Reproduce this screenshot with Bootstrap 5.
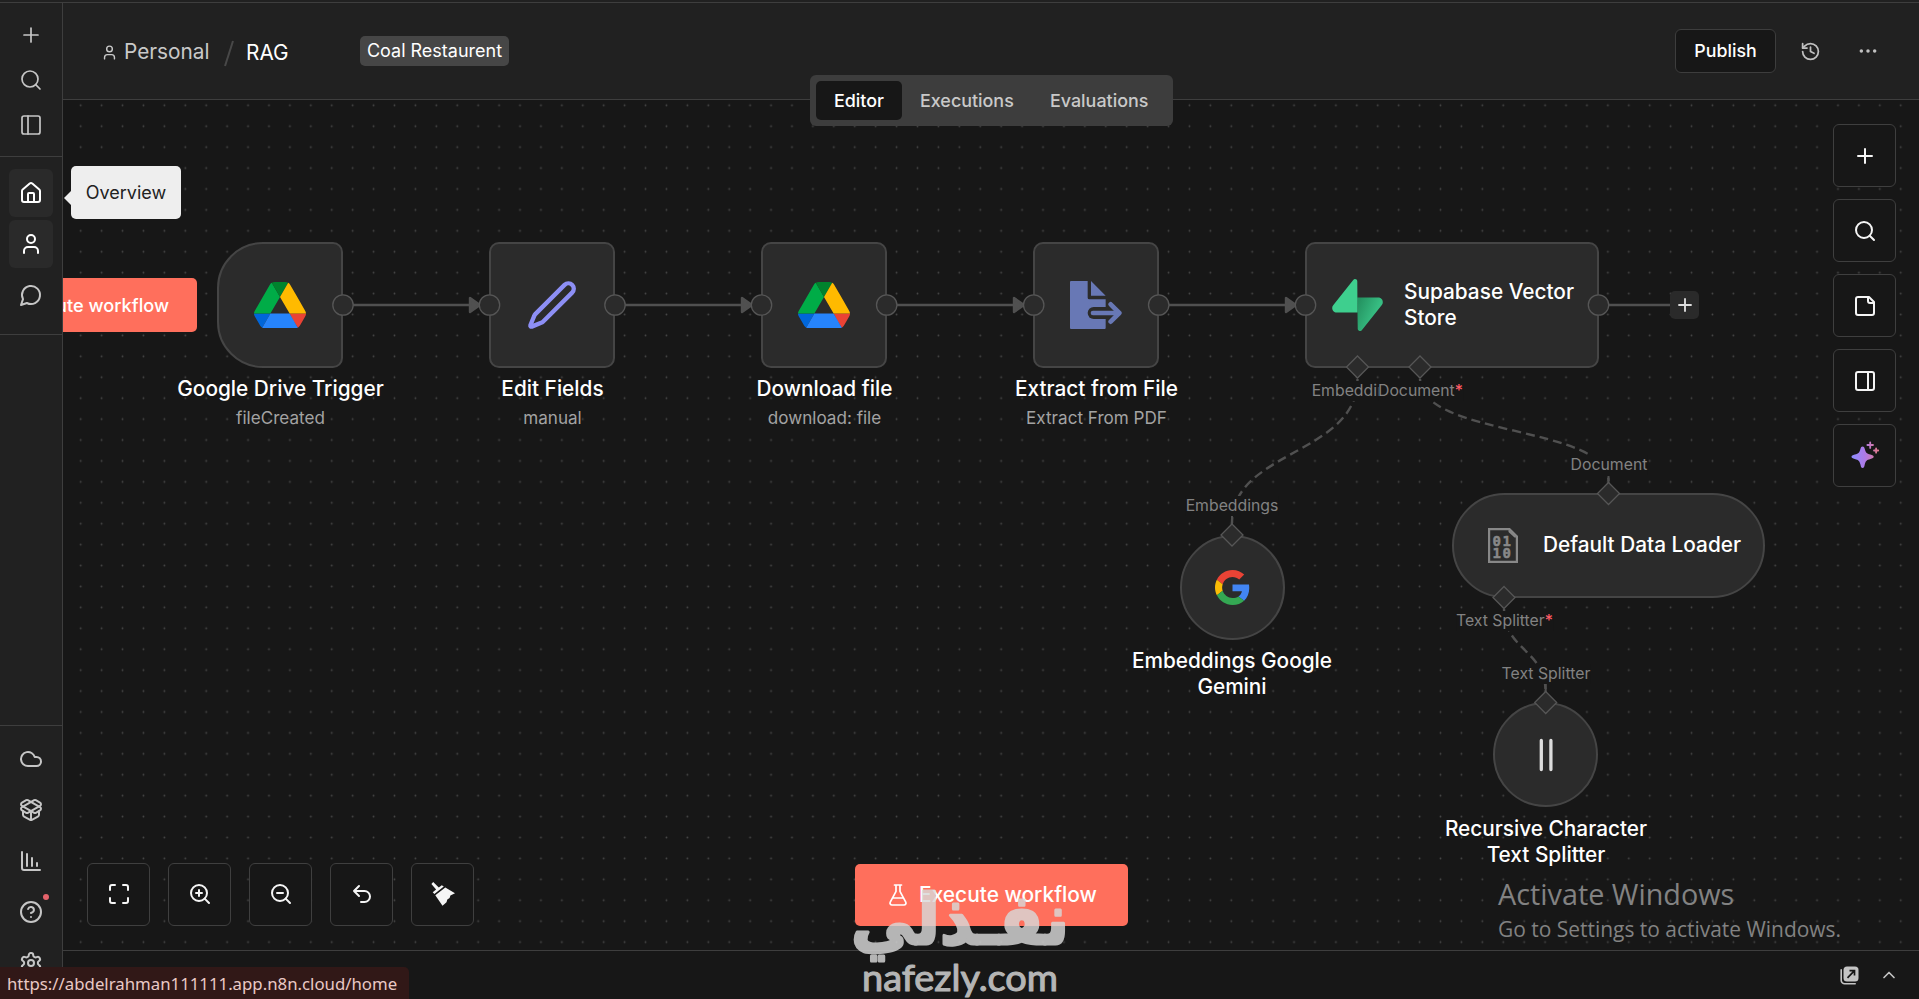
<!DOCTYPE html>
<html lang="en">
<head>
<meta charset="utf-8">
<title>RAG - n8n</title>
<meta name="viewport" content="width=device-width, initial-scale=1">
<link href="https://cdn.jsdelivr.net/npm/bootstrap@5.3.0/dist/css/bootstrap.min.css" rel="stylesheet">
<style>
  :root { --panel:#212121; --canvas:#171717; --line:#3e3e3e; --node:#2b2b2b; --accent:#ff6f5c; }
  body { background:var(--canvas); color:#fff; font-family:Inter,"Liberation Sans",sans-serif; font-size:18px; line-height:1.2; }
  .shell { width:1919px; height:999px; }
  .top-strip { height:3px; background:var(--panel); border-bottom:1px solid var(--line); }
  .ico { width:24px; height:24px; fill:none; stroke:currentColor; stroke-width:2; stroke-linecap:round; stroke-linejoin:round; display:block; flex:none; }
  .thin { stroke-width:1.7; }
  .ico-16 { width:17px; height:17px; }
  .ico-18 { width:18px; height:18px; }
  .ico-20 { width:20px; height:20px; }
  .ico-21 { width:21px; height:21px; }

  .side { width:63px; background:var(--panel); border-right:1px solid var(--line); color:#c6c6c6; }
  .side-group { border-bottom:1px solid var(--line); }
  .side-btn { width:44px; height:48px; border-radius:6px; position:relative; }
  .side-btn.on { background:#2a2a2a; color:#fff; }
  .side-top .side-btn { height:45px; }
  .g1 { height:154px; padding-top:9px; }
  .g2 { height:178px; padding-top:12px; }
  .g2 .side-btn { margin-bottom:3px; }
  .g3 { border-top:1px solid var(--line); padding-top:7px; height:274px; }
  .g3 .side-btn { height:51px; }
  .alert-dot { position:absolute; left:34px; top:8px; width:6px; height:6px; border-radius:50%; background:#e5636b; }

  .topbar { height:97px; background:var(--panel); border-bottom:1px solid var(--line); padding:0 36px 0 38px; }
  .crumbs { height:97px; padding-top:3px; width:187px; }
  .crumb-home { color:#c9c9c9; }
  .crumb-text { width:86px; margin-left:6px; font-size:20.8px; white-space:nowrap; }
  .crumb-now { font-size:20.8px; padding-top:1px; white-space:nowrap; }
  .chip { background:#464646; border-radius:5px; height:30px; width:149px; font-size:18px; margin-left:72px; margin-bottom:1px; }
  .btn-publish { width:101px; height:44px; background:var(--canvas); border:1px solid #3d3d3d; border-radius:6px; color:#fff; font-weight:500; font-size:17.8px; }
  .tail { color:#c0c0c0; padding-right:5px; }
  .hist { margin-left:24px; }
  .dots { margin-left:37px; }

  .tabs-pill { left:747px; top:-25px; width:363px; height:51px; background:#3d3d3d; border-radius:6px; padding:6px; font-weight:500; font-size:17.9px; color:#c9c9c9; z-index:5; }
  .tabs-pill span { height:39px; border-radius:5px; }
  .tabs-pill .sel { background:var(--canvas); color:#fff; width:86px; }
  .tab2 { padding-left:18px; width:130px; }
  .tab3 { padding-left:18px; }

  .board { background:var(--canvas); }
  .world { left:-63px; top:-100px; width:1919px; height:999px; }
  .world > * { position:absolute; }
  .wires { left:0; top:0; width:1919px; height:999px; }
  .nd { background:var(--node); border:2px solid #454545; width:126px; height:126px; top:242px; border-radius:10px; display:flex; align-items:center; justify-content:center; }
  .n1 { left:217px; border-radius:46px 10px 10px 46px; }
  .n2 { left:489px; } .n3 { left:761px; } .n4 { left:1033px; }
  .n5 { left:1305px; width:294px; justify-content:flex-start; padding-left:25px; gap:21px; }
  .n6 { left:1180px; top:535px; width:105px; height:105px; border-radius:50%; }
  .n7 { left:1452px; top:493px; width:313px; height:105px; border-radius:53px; justify-content:flex-start; padding-left:34px; gap:25px; }
  .n7 .ttl { margin-top:-2px; }
  .n8 { left:1493px; top:702px; width:105px; height:105px; border-radius:50%; }
  .ttl { font-weight:500; font-size:20.8px; line-height:26px; color:#fff; text-align:center; white-space:nowrap; }
  .cap { width:280px; text-align:center; top:376px; }
  .cap small { display:block; font-size:17.1px; font-weight:400; color:#a3a3a3; line-height:22px; margin-top:5px; }
  .c1 { left:140.5px; } .c2 { left:412.5px; } .c3 { left:684.5px; } .c4 { left:956.5px; }
  .c6 { left:1092px; top:648px; } .c8 { left:1406px; top:816px; }
  .edit-ico { width:52px; height:52px; color:#8d8ff5; }
  .port { background:var(--canvas); color:#828282; font-size:15.8px; line-height:20px; transform:translateX(-50%); white-space:nowrap; }
  .port b { color:#ff5b66; font-weight:500; }
  .pa { left:1358px; top:381px; } .pb { left:1420.5px; top:381px; } .pc { left:1232px; top:496px; }
  .pd { left:1609px; top:455px; } .pe { left:1504.5px; top:611px; } .pf { left:1546px; top:664px; }
  .add-node { left:1670px; top:291px; width:29px; height:28px; background:#2a2a2a; border-radius:5px; color:#ddd; display:flex; align-items:center; justify-content:center; }

  .run-left { left:40px; top:278px; width:157px; height:54px; background:var(--accent); border-radius:5px; font-weight:500; font-size:18.2px; padding:2px 28px 0 0; }
  .run-main { left:855px; top:864px; width:273px; height:62px; background:var(--accent); border-radius:5px; font-weight:500; font-size:20.9px; gap:9px; }
  .sq { width:63px; height:63px; border:1px solid #3f3f3f; border-radius:6px; background:var(--canvas); color:#f5f5f5; display:flex; align-items:center; justify-content:center; }
  .tools-b { left:87px; top:863px; gap:18px; }
  .tools-b .sq { padding-bottom:1px; }
  .tools-r { left:1833px; top:124px; gap:12px; }

  .activate { left:1498px; top:873px; color:#828282; font-family:"Open Sans","Noto Sans",sans-serif; white-space:nowrap; }
  .activate .a1 { font-size:28.8px; line-height:41px; }
  .activate .a2 { font-size:20.95px; line-height:30px; }

  .logbar { height:49px; border-top:1px solid var(--line); padding-right:20px; color:#c4c4c4; gap:20px; }
  .tip { left:71px; top:166px; width:110px; height:53px; background:#eee; color:#222; border-radius:5px; z-index:9; font-size:18px; }
  .tip::before { content:""; position:absolute; left:-7px; top:24px; border:8px solid transparent; border-right:8px solid #eee; border-left:0; }
  .url { left:0; bottom:0; width:409px; height:32px; background:#311817; color:#e9c9c5; border-top-right-radius:5px; font-family:"Noto Sans","Open Sans",sans-serif; font-size:16.8px; padding:2px 0 0 7px; z-index:9; white-space:nowrap; }
  .wmark { left:850px; top:880px; width:220px; height:119px; z-index:10; opacity:.82; fill:#d8d8d8; stroke:#d8d8d8; }
</style>
</head>
<body class="overflow-hidden">
<div class="shell d-flex flex-column position-relative overflow-hidden">
  <div class="top-strip flex-shrink-0"></div>
  <div class="d-flex flex-grow-1">

    <nav class="side d-flex flex-column flex-shrink-0">
      <div class="side-group side-top g1 d-flex flex-column align-items-center">
        <div class="side-btn d-flex align-items-center justify-content-center"><svg class="ico thin" viewBox="0 0 24 24"><path d="M5 12h14M12 5v14"/></svg></div>
        <div class="side-btn d-flex align-items-center justify-content-center"><svg class="ico thin" viewBox="0 0 24 24"><circle cx="11" cy="11" r="8"/><path d="m21 21-4.3-4.3"/></svg></div>
        <div class="side-btn d-flex align-items-center justify-content-center"><svg class="ico thin" viewBox="0 0 24 24"><rect x="3" y="3" width="18" height="18" rx="2"/><path d="M9 3v18"/></svg></div>
      </div>
      <div class="side-group g2 d-flex flex-column align-items-center">
        <div class="side-btn on d-flex align-items-center justify-content-center"><svg class="ico" viewBox="0 0 24 24"><path d="M15 21v-8a1 1 0 0 0-1-1h-4a1 1 0 0 0-1 1v8"/><path d="M3 10a2 2 0 0 1 .709-1.528l7-5.999a2 2 0 0 1 2.582 0l7 5.999A2 2 0 0 1 21 10v9a2 2 0 0 1-2 2H5a2 2 0 0 1-2-2z"/></svg></div>
        <div class="side-btn on d-flex align-items-center justify-content-center"><svg class="ico" viewBox="0 0 24 24"><path d="M19 21v-2a4 4 0 0 0-4-4H9a4 4 0 0 0-4 4v2"/><circle cx="12" cy="7" r="4"/></svg></div>
        <div class="side-btn d-flex align-items-center justify-content-center"><svg class="ico" viewBox="0 0 24 24"><path d="M7.9 20A9 9 0 1 0 4 16.1L2 22Z"/></svg></div>
      </div>
      <div class="g3 mt-auto d-flex flex-column align-items-center">
        <div class="side-btn d-flex align-items-center justify-content-center"><svg class="ico" viewBox="0 0 24 24"><path d="M17.5 19H9a7 7 0 1 1 6.71-9h1.79a4.5 4.5 0 1 1 0 9Z"/></svg></div>
        <div class="side-btn d-flex align-items-center justify-content-center"><svg class="ico" viewBox="0 0 24 24"><path d="M12 22v-9"/><path d="M15.17 2.21a1.67 1.67 0 0 1 1.63 0L21 4.57a1.93 1.93 0 0 1 0 3.36L8.82 14.79a1.655 1.655 0 0 1-1.64 0L3 12.43a1.93 1.93 0 0 1 0-3.36z"/><path d="M20 13v3.87a2.06 2.06 0 0 1-1.11 1.83l-6 3.08a1.93 1.93 0 0 1-1.78 0l-6-3.08A2.06 2.06 0 0 1 4 16.87V13"/><path d="M21 12.43a1.93 1.93 0 0 0 0-3.36L8.83 2.2a1.64 1.64 0 0 0-1.63 0L3 4.57a1.93 1.93 0 0 0 0 3.36l12.18 6.86a1.636 1.636 0 0 0 1.63 0z"/></svg></div>
        <div class="side-btn d-flex align-items-center justify-content-center"><svg class="ico" viewBox="0 0 24 24"><path d="M13 17V9M18 17v-3M3 3v16a2 2 0 0 0 2 2h16M8 17V5"/></svg></div>
        <div class="side-btn d-flex align-items-center justify-content-center"><svg class="ico" viewBox="0 0 24 24"><circle cx="12" cy="12" r="10"/><path d="M9.09 9a3 3 0 0 1 5.83 1c0 2-3 3-3 3M12 17h.01"/></svg><i class="alert-dot"></i></div>
        <div class="side-btn d-flex align-items-center justify-content-center"><svg class="ico" viewBox="0 0 24 24"><path d="M12.22 2h-.44a2 2 0 0 0-2 2v.18a2 2 0 0 1-1 1.73l-.43.25a2 2 0 0 1-2 0l-.15-.08a2 2 0 0 0-2.73.73l-.22.38a2 2 0 0 0 .73 2.73l.15.1a2 2 0 0 1 1 1.72v.51a2 2 0 0 1-1 1.74l-.15.09a2 2 0 0 0-.73 2.73l.22.38a2 2 0 0 0 2.73.73l.15-.08a2 2 0 0 1 2 0l.43.25a2 2 0 0 1 1 1.73V20a2 2 0 0 0 2 2h.44a2 2 0 0 0 2-2v-.18a2 2 0 0 1 1-1.73l.43-.25a2 2 0 0 1 2 0l.15.08a2 2 0 0 0 2.73-.73l.22-.39a2 2 0 0 0-.73-2.73l-.15-.08a2 2 0 0 1-1-1.74v-.5a2 2 0 0 1 1-1.74l.15-.09a2 2 0 0 0 .73-2.73l-.22-.38a2 2 0 0 0-2.73-.73l-.15.08a2 2 0 0 1-2 0l-.43-.25a2 2 0 0 1-1-1.73V4a2 2 0 0 0-2-2z"/><circle cx="12" cy="12" r="3"/></svg></div>
      </div>
    </nav>

    <main class="d-flex flex-column flex-grow-1">
      <header class="topbar d-flex align-items-center flex-shrink-0">
        <div class="crumbs d-flex align-items-center">
          <svg class="ico ico-16 crumb-home flex-shrink-0" viewBox="0 0 24 24"><path d="M19 21v-2a4 4 0 0 0-4-4H9a4 4 0 0 0-4 4v2"/><circle cx="12" cy="7" r="4"/></svg>
          <span class="crumb-home crumb-text flex-shrink-0">Personal</span>
          <svg class="flex-shrink-0" width="36" height="28" viewBox="0 0 36 28" fill="none" stroke="#484848" stroke-width="2"><path d="M15 27 23 2"/></svg>
          <span class="crumb-now">RAG</span>
        </div>
        <div class="chip d-flex align-items-center justify-content-center">Coal Restaurent</div>
        <div class="ms-auto d-flex align-items-center tail">
          <button class="btn btn-publish p-0">Publish</button>
          <svg class="ico ico-21 hist" viewBox="0 0 24 24"><path d="M3 12a9 9 0 1 0 9-9 9.75 9.75 0 0 0-6.74 2.74L3 8"/><path d="M3 3v5h5M12 7v5l4 2"/></svg>
          <svg class="ico ico-20 dots" viewBox="0 0 24 24"><circle cx="4" cy="12" r="1.1"/><circle cx="12" cy="12" r="1.1"/><circle cx="20" cy="12" r="1.1"/></svg>
        </div>
      </header>

      <section class="board position-relative flex-grow-1">
        <div class="tabs-pill position-absolute d-flex">
          <span class="sel d-flex align-items-center justify-content-center">Editor</span>
          <span class="d-flex align-items-center tab2">Executions</span>
          <span class="d-flex align-items-center tab3">Evaluations</span>
        </div>
        <div class="position-absolute top-0 start-0 w-100 h-100 overflow-hidden">
        <div class="world position-absolute">
          <svg class="wires" viewBox="0 0 1919 999" fill="none">
            <defs>
              <pattern id="grid" x="70.24" y="94.84" width="20.92" height="20.92" patternUnits="userSpaceOnUse"><circle cx="10.46" cy="10.46" r=".9" fill="#474747"/></pattern>
            </defs>
            <rect x="63" y="100" width="1856" height="850" fill="url(#grid)"/>
            <g stroke="#505050" stroke-width="2.4">
              <path d="M353 305H471M625 305H743M897 305H1015M1169 305H1287M1609 305H1670"/>
              <g fill="#505050" stroke-linejoin="round"><path d="M470 298v14l10-7zM742 298v14l10-7zM1014 298v14l10-7zM1286 298v14l10-7z"/></g>
              <g stroke-dasharray="9 5">
                <path d="M1357.500 379C1357.500 455 1232 450 1232 523"/>
                <path d="M1420 379C1420 437 1608.500 425 1608.500 481"/>
                <path d="M1504 609C1504 650 1545.500 650 1545.500 691"/>
              </g>
              <path stroke-width="2" d="M1232 516v9M1608.500 476v8M1545.700 684v8"/>
            </g>
          </svg>

          <div class="nd n1"><svg width="52" height="46.500" viewBox="0 0 87.300 78"><path fill="#0066da" d="m6.600 66.850 3.850 6.650c.8 1.400 1.950 2.500 3.300 3.300l13.750-23.800h-27.500c0 1.550.4 3.100 1.200 4.500z"/><path fill="#00ac47" d="m43.650 25-13.750-23.800c-1.350.8-2.500 1.900-3.300 3.300l-25.400 44a9.060 9.060 0 0 0-1.200 4.500h27.500z"/><path fill="#ea4335" d="m73.550 76.800c1.350-.8 2.500-1.900 3.300-3.300l1.600-2.750 7.650-13.250c.8-1.400 1.200-2.950 1.200-4.500h-27.502l5.852 11.500z"/><path fill="#00832d" d="m43.650 25 13.750-23.800c-1.350-.8-2.900-1.200-4.500-1.200h-18.500c-1.600 0-3.150.45-4.500 1.200z"/><path fill="#2684fc" d="m59.800 53h-32.300l-13.750 23.800c1.350.8 2.900 1.200 4.500 1.200h50.800c1.600 0 3.150-.45 4.500-1.200z"/><path fill="#ffba00" d="m73.400 26.500-12.700-22c-.8-1.400-1.950-2.500-3.300-3.300l-13.750 23.800 16.150 28h27.450c0-1.550-.4-3.100-1.200-4.500z"/></svg></div>
          <div class="cap c1"><div class="ttl">Google Drive Trigger</div><small>fileCreated</small></div>

          <div class="nd n2"><svg class="ico edit-ico" viewBox="0 0 24 24"><path d="M21.300 6.300a2.300 2.300 0 0 0-3.500-3.600L4.300 16.200a2 2 0 0 0-.5.830L2.021 21.356a.5.5 0 0 0 .623.622L7 20.200a2 2 0 0 0 .83-.497z"/></svg></div>
          <div class="cap c2"><div class="ttl">Edit Fields</div><small>manual</small></div>

          <div class="nd n3"><svg width="52" height="46.500" viewBox="0 0 87.300 78"><path fill="#0066da" d="m6.600 66.850 3.850 6.650c.8 1.400 1.950 2.500 3.300 3.300l13.750-23.800h-27.500c0 1.550.4 3.100 1.200 4.500z"/><path fill="#00ac47" d="m43.650 25-13.750-23.800c-1.350.8-2.500 1.900-3.300 3.300l-25.400 44a9.060 9.060 0 0 0-1.200 4.500h27.500z"/><path fill="#ea4335" d="m73.550 76.800c1.350-.8 2.500-1.900 3.300-3.300l1.600-2.750 7.650-13.250c.8-1.400 1.200-2.950 1.200-4.500h-27.502l5.852 11.500z"/><path fill="#00832d" d="m43.650 25 13.750-23.800c-1.350-.8-2.900-1.200-4.500-1.200h-18.500c-1.600 0-3.150.45-4.500 1.200z"/><path fill="#2684fc" d="m59.800 53h-32.300l-13.750 23.800c1.350.8 2.900 1.200 4.500 1.200h50.800c1.600 0 3.150-.45 4.500-1.200z"/><path fill="#ffba00" d="m73.400 26.500-12.700-22c-.8-1.400-1.950-2.500-3.300-3.300l-13.750 23.800 16.150 28h27.450c0-1.550-.4-3.100-1.200-4.500z"/></svg></div>
          <div class="cap c3"><div class="ttl">Download file</div><small>download: file</small></div>

          <div class="nd n4"><svg width="52" height="48" viewBox="0 0 156 144" fill="none" stroke-linecap="round" stroke-linejoin="round"><path fill="#6878b5" d="M3 0H53V50a5 5 0 0 0 5 5h49v86a3 3 0 0 1-3 3H3a3 3 0 0 1-3-3V3a3 3 0 0 1 3-3zM63 0l44 44H63z"/><path stroke="#2b2b2b" stroke-width="36" d="M71 96h50"/><path stroke="#6878b5" stroke-width="14" d="M69 96h70"/><path stroke="#6878b5" stroke-width="14" d="M122 70l26 26-26 26"/></svg></div>
          <div class="cap c4"><div class="ttl">Extract from File</div><small>Extract From PDF</small></div>

          <div class="nd n5"><svg width="51" height="52.500" viewBox="0 0 109 113"><defs><linearGradient id="sb" x1="54" y1="55" x2="94" y2="72" gradientUnits="userSpaceOnUse"><stop stop-color="#249361"/><stop offset="1" stop-color="#37bd82"/></linearGradient></defs><path fill="url(#sb)" d="M63.708 110.284C60.848 113.885 55.050 111.912 54.981 107.314L53.974 40.063H99.194C107.384 40.063 111.952 49.523 106.859 55.937Z"/><path fill="#3ecf8e" d="M45.317 2.071C48.177-1.530 53.975.443 54.043 5.041L54.485 72.292H9.831C1.640 72.292-2.928 62.832 2.166 56.418Z"/></svg><div class="ttl text-start">Supabase Vector<br>Store</div></div>
          <div class="add-node"><svg class="ico ico-18" viewBox="0 0 24 24"><path d="M4 12h16M12 4v16" stroke-width="2.500"/></svg></div>

          <div class="nd n6"><svg width="35" height="35" viewBox="0 0 48 48"><path fill="#EA4335" d="M24 9.500c3.540 0 6.710 1.220 9.210 3.600l6.850-6.850C35.900 2.380 30.470 0 24 0 14.620 0 6.510 5.380 2.560 13.220l7.980 6.190C12.430 13.720 17.740 9.500 24 9.500z"/><path fill="#4285F4" d="M46.980 24.550c0-1.570-.15-3.090-.38-4.550H24v9.020h12.940c-.58 2.960-2.260 5.480-4.780 7.180l7.730 6c4.510-4.180 7.090-10.360 7.090-17.650z"/><path fill="#FBBC05" d="M10.530 28.590c-.48-1.450-.76-2.990-.76-4.590s.27-3.140.76-4.590l-7.980-6.190C.92 16.460 0 20.120 0 24c0 3.880.92 7.540 2.560 10.780l7.970-6.190z"/><path fill="#34A853" d="M24 48c6.480 0 11.930-2.130 15.890-5.810l-7.730-6c-2.150 1.450-4.920 2.300-8.160 2.300-6.260 0-11.570-4.220-13.470-9.910l-7.980 6.190C6.510 42.620 14.620 48 24 48z"/></svg></div>
          <div class="cap c6 ttl">Embeddings Google<br>Gemini</div>

          <div class="nd n7"><svg width="30" height="35" viewBox="0 0 30 35"><path fill="none" stroke="#888" stroke-width="2.200" d="M1.100 1.100H21.500L28.900 8.500V33.900H1.100z"/><path fill="#888" d="M20.500 1l8.500 8.500h-2.500L20.500 4z"/><g fill="#888" stroke="#888" stroke-width=".5" font-family="DejaVu Sans Mono" font-weight="700" font-size="14"><text x="4.500" y="17.500" textLength="18.500">01</text><text x="4.500" y="30" textLength="18.500">10</text></g></svg><div class="ttl">Default Data Loader</div></div>

          <div class="nd n8"><svg width="16" height="34" viewBox="0 0 16 34" stroke="#ddd" stroke-width="3.300" stroke-linecap="round"><path d="M3.300 2.500v29M12.900 2.500v29"/></svg></div>
          <div class="cap c8 ttl">Recursive Character<br>Text Splitter</div>

          <div class="port pa">Embeddings</div>
          <div class="port pb">Document<b>*</b></div>
          <div class="port pc">Embeddings</div>
          <div class="port pd">Document</div>
          <div class="port pe">Text Splitter<b>*</b></div>
          <div class="port pf">Text Splitter</div>

          <svg class="wires" viewBox="0 0 1919 999" fill="#2b2b2b" stroke="#565656" stroke-width="1.300">
            <circle cx="343" cy="305" r="10.200"/><circle cx="489.500" cy="305" r="10.200"/><circle cx="615" cy="305" r="10.200"/><circle cx="761.500" cy="305" r="10.200"/><circle cx="886.700" cy="305" r="10.200"/><circle cx="1033.700" cy="305" r="10.200"/><circle cx="1158.700" cy="305" r="10.200"/><circle cx="1305.500" cy="305" r="10.200"/><circle cx="1598.500" cy="305" r="10.200"/>
            <path d="M1357.500 356l11 11-11 11-11-11zM1420 356l11 11-11 11-11-11zM1232 524l11 11-11 11-11-11zM1608.500 482.500l11 11-11 11-11-11zM1504 586.500l11 11-11 11-11-11zM1545.700 691.500l11 11-11 11-11-11z"/>
          </svg>

          <div class="run-left d-flex align-items-center justify-content-end text-nowrap">ute workflow</div>

          <div class="tools-b d-flex">
            <div class="sq"><svg class="ico" viewBox="0 0 24 24"><path d="M8 3H5a2 2 0 0 0-2 2v3M21 8V5a2 2 0 0 0-2-2h-3M3 16v3a2 2 0 0 0 2 2h3M16 21h3a2 2 0 0 0 2-2v-3"/></svg></div>
            <div class="sq"><svg class="ico" viewBox="0 0 24 24"><circle cx="11" cy="11" r="8"/><path d="m21 21-4.350-4.350M11 8v6M8 11h6"/></svg></div>
            <div class="sq"><svg class="ico" viewBox="0 0 24 24"><circle cx="11" cy="11" r="8"/><path d="m21 21-4.350-4.350M8 11h6"/></svg></div>
            <div class="sq"><svg class="ico" viewBox="0 0 24 24"><path d="M9 14 4 9l5-5M4 9h10.500a5.500 5.500 0 0 1 0 11H11"/></svg></div>
            <div class="sq"><svg width="24" height="24" viewBox="0 0 24 24" fill="#f5f5f5"><path d="M.4 1.900 2.200.1l5.600 5.400 3-2.300 2 1.300L3.400 12 1.700 10.200l3.400-2.600z"/><path d="M4.300 13.200 14.300 5.400 24 11.300l-4.600 2.200-.8 2.600-2.300 1.300-.8 2.900-4 3.400z"/></svg></div>
          </div>

          <button class="run-main btn text-white p-0 d-flex align-items-center justify-content-center text-nowrap"><svg class="ico thin" viewBox="0 0 24 24"><path d="M14 2v6a2 2 0 0 0 .245.960l5.510 10.080A2 2 0 0 1 18 22H6a2 2 0 0 1-1.755-2.960l5.510-10.080A2 2 0 0 0 10 8V2M6.453 15h11.094M8.500 2h7"/></svg><span>Execute workflow</span></button>

          <div class="tools-r d-flex flex-column">
            <div class="sq"><svg class="ico" viewBox="0 0 24 24"><path d="M5 12h14M12 5v14"/></svg></div>
            <div class="sq"><svg class="ico" viewBox="0 0 24 24"><circle cx="11" cy="11" r="8"/><path d="m21 21-4.300-4.300"/></svg></div>
            <div class="sq"><svg class="ico" viewBox="0 0 24 24"><path d="M16 3H5a2 2 0 0 0-2 2v14a2 2 0 0 0 2 2h14a2 2 0 0 0 2-2V8Z"/><path d="M15 3v4a2 2 0 0 0 2 2h4"/></svg></div>
            <div class="sq"><svg class="ico" viewBox="0 0 24 24"><rect x="3" y="3" width="18" height="18" rx="2"/><path d="M15 3v18"/></svg></div>
            <div class="sq"><svg width="30" height="30" viewBox="0 0 30 30"><defs><linearGradient id="sp" x1="2" y1="16" x2="28" y2="16" gradientUnits="userSpaceOnUse"><stop stop-color="#8e8cff"/><stop offset=".5" stop-color="#ae7ae6"/><stop offset="1" stop-color="#e2798d"/></linearGradient></defs><path fill="url(#sp)" d="M12.600 5.500c1.200 0 1.700.8 2.100 2.300 1 3.800 1.700 4.700 5.700 5.800 2.200.6 3.300 1.100 3.300 2.200s-1.100 1.600-3.300 2.200c-4 1.100-4.700 2-5.700 5.800-.4 2.200-.9 3.300-2.100 3.300s-1.700-1.100-2.100-3.300c-1-3.800-1.700-4.700-5.700-5.800-2.200-.6-3.300-1.100-3.300-2.200s1.100-1.600 3.300-2.200c4-1.100 4.700-2 5.700-5.800.4-1.500.9-2.300 2.100-2.300z"/><path stroke="url(#sp)" stroke-width="1.800" stroke-linecap="round" d="M20.200 1.300v5.600M17.400 4h5.600M26.100 7.500v4.200M24 9.500h4.200"/></svg></div>
          </div>

          <div class="activate"><div class="a1">Activate Windows</div><div class="a2">Go to Settings to activate Windows.</div></div>
        </div>
        </div>
      </section>

      <footer class="logbar d-flex align-items-center justify-content-end flex-shrink-0">
        <svg width="19" height="19" viewBox="0 0 19 19"><rect x="3.500" y=".5" width="15" height="15" rx="3.500" fill="#c4c4c4"/><path d="M1.200 3.800v10.500a3.500 3.500 0 0 0 3.500 3.500h10.500" fill="none" stroke="#c4c4c4" stroke-width="1.600" stroke-linecap="round"/><path d="M7.500 11.800 14 5.200M9.500 4.600h5v5" fill="none" stroke="#171717" stroke-width="1.700"/></svg>
        <svg class="ico ico-20" viewBox="0 0 24 24"><path d="m18 15-6-6-6 6"/></svg>
      </footer>
    </main>
  </div>

  <div class="tip position-absolute d-flex align-items-center justify-content-center">Overview</div>
  <div class="url position-absolute d-flex align-items-center">https://abdelrahman111111.app.n8n.cloud/home</div>
  <svg class="wmark position-absolute" viewBox="0 0 220 119" stroke-linejoin="round">
    <text x="110" y="64" direction="rtl" text-anchor="middle" font-family="DejaVu Sans" font-weight="700" font-size="70" stroke-width="3" textLength="218" lengthAdjust="spacingAndGlyphs">نفـذلي</text>
    <text x="12" y="111" font-family="Lato" font-weight="400" font-size="37" stroke-width="1.100" textLength="196" lengthAdjust="spacingAndGlyphs">nafezly.com</text>
  </svg>
</div>
<script src="https://cdn.jsdelivr.net/npm/bootstrap@5.3.0/dist/js/bootstrap.bundle.min.js"></script>
</body>
</html>
